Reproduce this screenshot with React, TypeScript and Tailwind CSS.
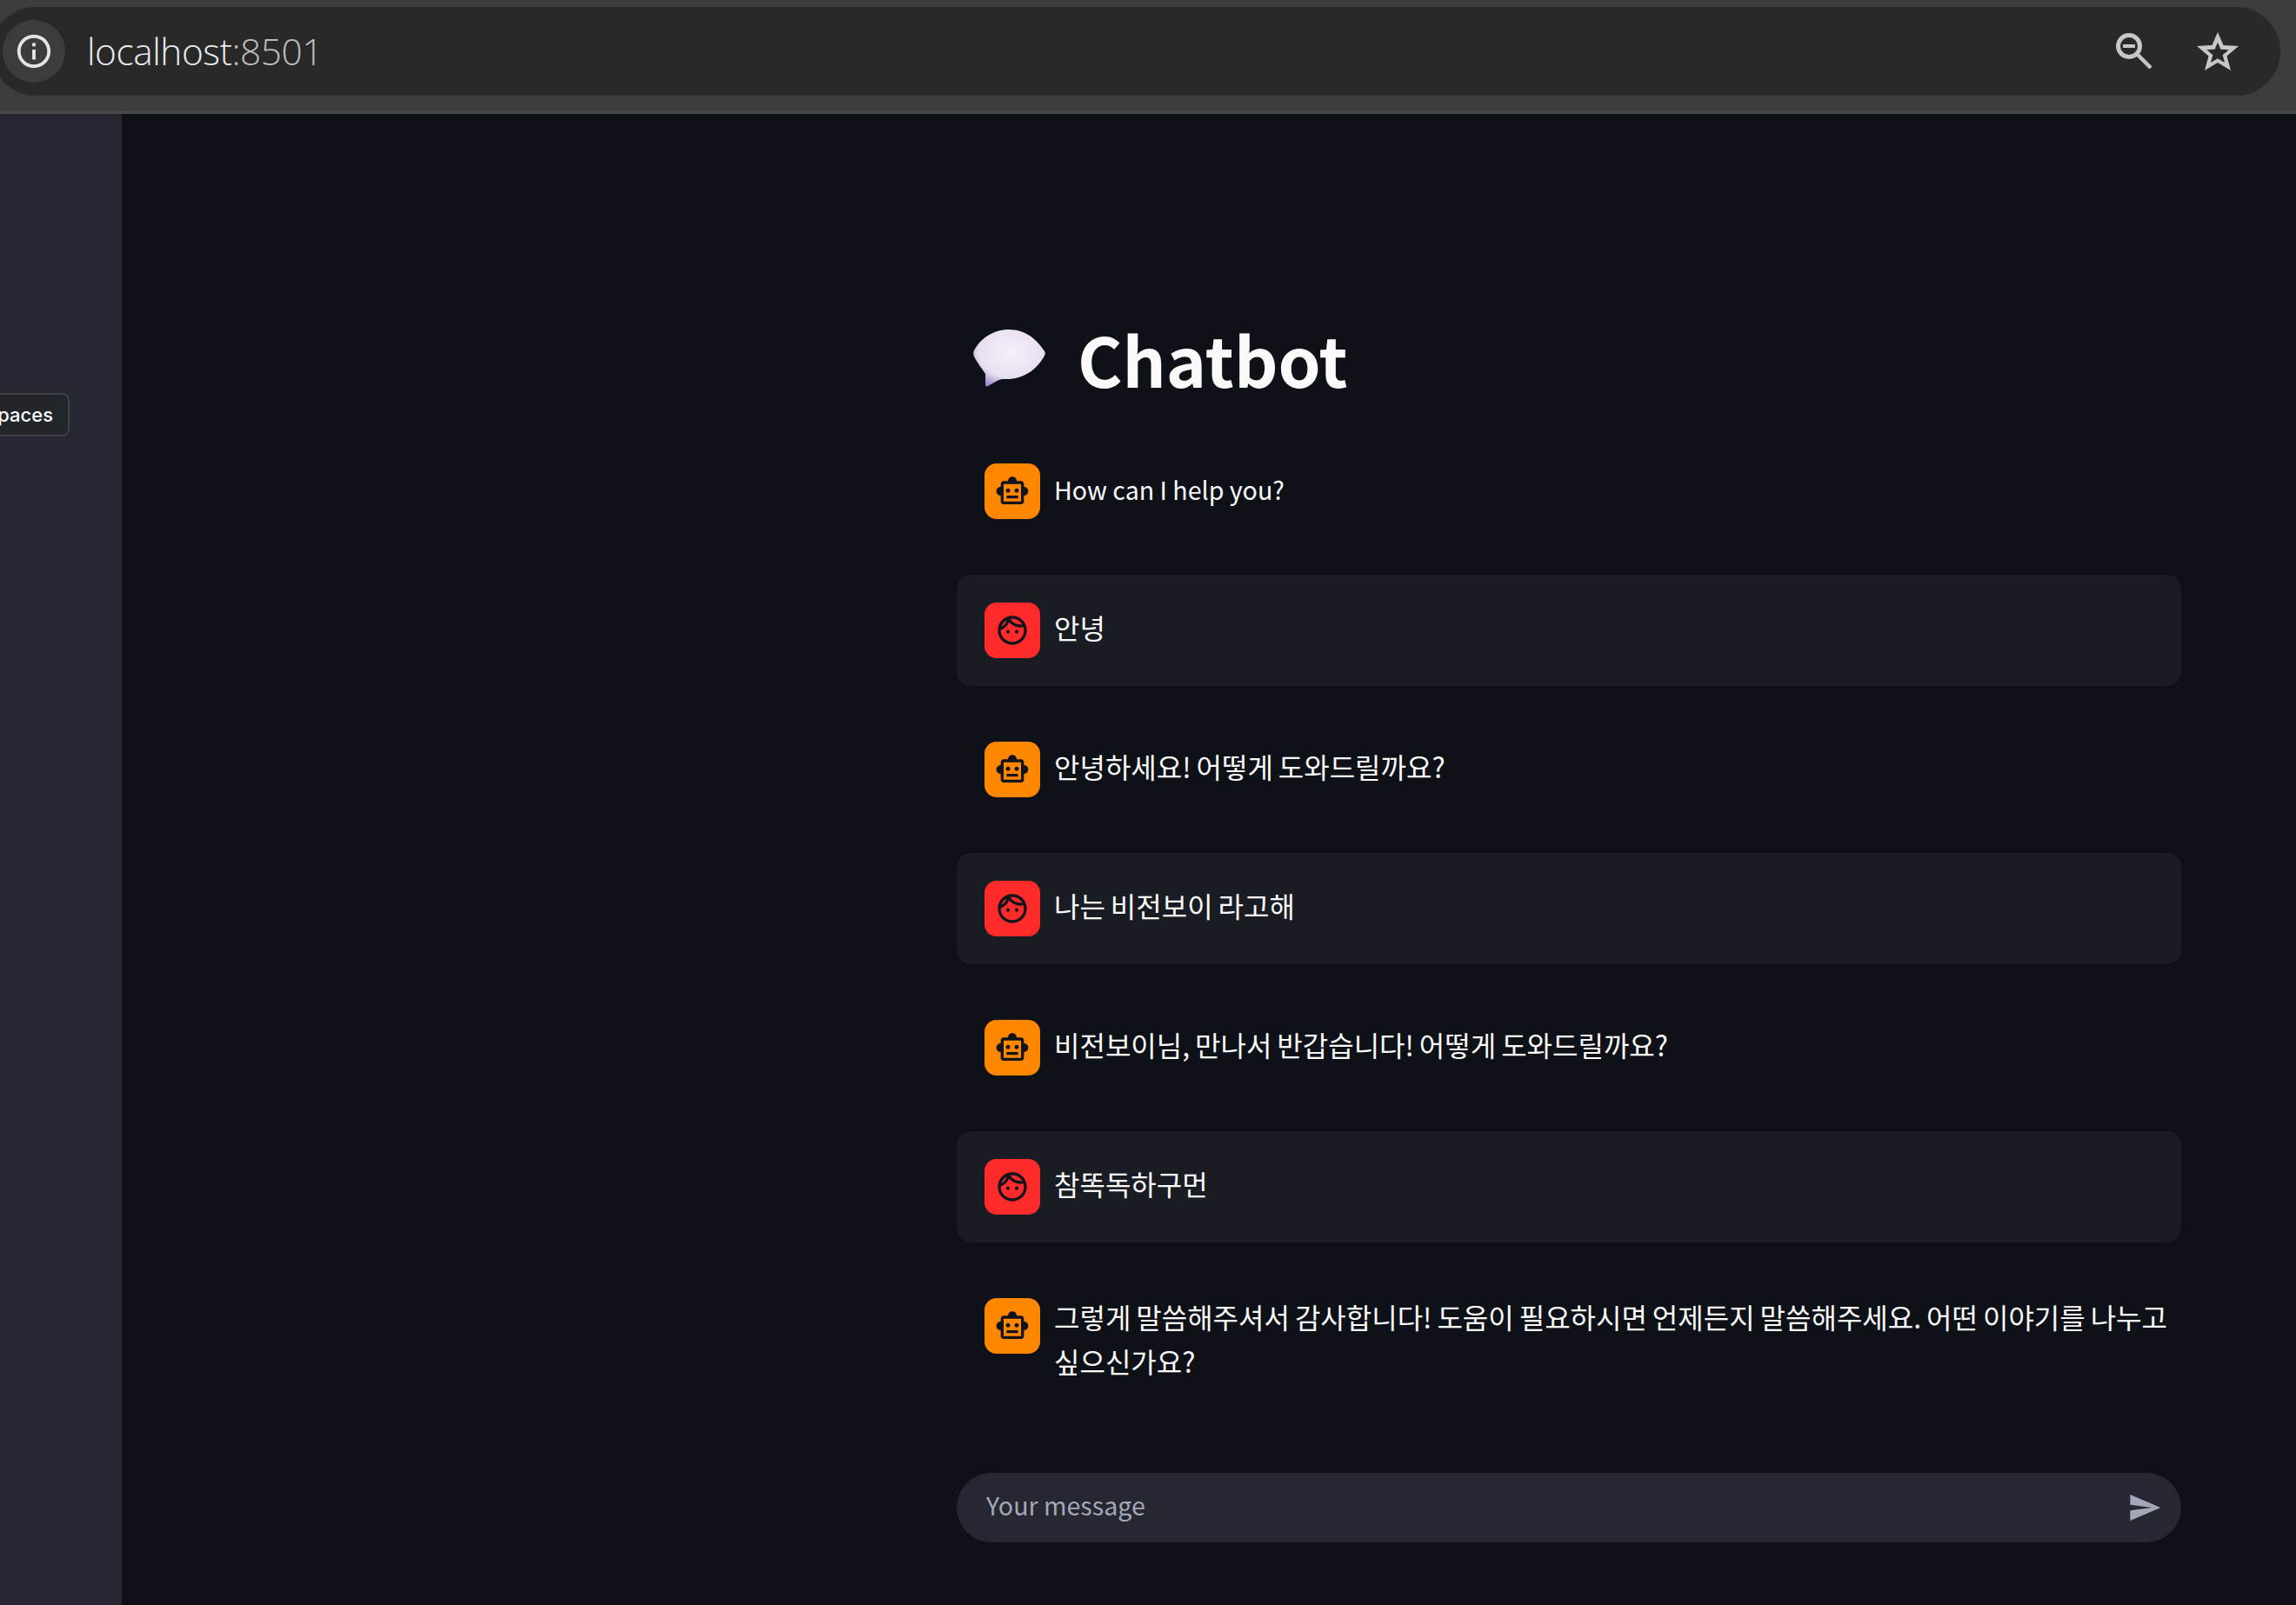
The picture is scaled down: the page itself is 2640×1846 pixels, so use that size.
import { MdOutlineSmartToy, MdOutlineFace, MdInfoOutline, MdSend } from "react-icons/md";

const FONT = "font-['Noto_Sans_CJK_KR','Noto_Sans',sans-serif]";

type Msg = { role: "bot" | "user"; text: string; latin?: boolean; tall?: boolean };

const MESSAGES: Msg[] = [
  { role: "bot", text: "How can I help you?", latin: true },
  { role: "user", text: "안녕" },
  { role: "bot", text: "안녕하세요! 어떻게 도와드릴까요?" },
  { role: "user", text: "나는 비전보이 라고해" },
  { role: "bot", text: "비전보이님, 만나서 반갑습니다! 어떻게 도와드릴까요?" },
  { role: "user", text: "참똑독하구먼" },
  {
    role: "bot",
    text: "그렇게 말씀해주셔서 감사합니다! 도움이 필요하시면 언제든지 말씀해주세요. 어떤 이야기를 나누고 싶으신가요?",
    tall: true,
  },
];

function SpeechBubble() {
  return (
    <svg width="88" height="70" viewBox="0 0 88 70" className="shrink-0">
      <defs>
        <radialGradient id="bubbleFill" cx="52%" cy="40%" r="64%">
          <stop offset="0%" stopColor="#f5eff9" />
          <stop offset="70%" stopColor="#e8e0f0" />
          <stop offset="100%" stopColor="#a18cd0" />
        </radialGradient>
      </defs>
      <path
        d="M43 2C62 2 75 13 84 27C85 29 85 30 84 32C77 45 63 60 37 59C33 59 31 60 26 63L19 67C17 68 16 67 16 65L16 53C13 48 7 41 3 33C2 30 2 28 3 26C11 12 25 2 43 2Z"
        fill="url(#bubbleFill)"
      />
    </svg>
  );
}

function ZoomOutIcon() {
  return (
    <svg width="44" height="44" viewBox="0 0 44 44" fill="none" stroke="currentColor">
      <circle cx="16" cy="16" r="12.5" strokeWidth="5" />
      <path d="M9 16H23" strokeWidth="4" />
      <path d="M25 25L41 41" strokeWidth="4.5" />
    </svg>
  );
}

function StarIcon() {
  return (
    <svg width="48" height="44" viewBox="0 0 48 44" fill="currentColor">
      <path
        fillRule="evenodd"
        d="M24 0L30.5 15L48 16L34.5 27.5L39 44L24 35L9 44L13.5 27.5L0 16L17.5 15ZM24 11.7L20.55 19.7L11.3 20.2L18.4 26.3L16 35L24 30.3L32 35L29.6 26.3L36.7 20.2L27.45 19.7Z"
      />
    </svg>
  );
}

function ChatRow({ role, text, latin, tall }: Msg) {
  const isUser = role === "user";
  let textClass = "text-[32px] pt-[3px] [word-spacing:-1.2px]";
  if (latin) textClass = "text-[28.6px] pt-[4px]";
  if (tall) textClass = "text-[32px] -mt-[4px] [word-spacing:-1.2px]";
  return (
    <div className={`flex gap-[16px] py-[32px] pl-[32px] pr-[8px] rounded-[16px] ${isUser ? "bg-[#1a1c24]" : ""}`}>
      <div
        className={`w-[64px] h-[64px] shrink-0 rounded-[14px] flex items-center justify-center text-[#12141c] ${
          isUser ? "bg-[#ff2b2b]" : "bg-[#ff8700]"
        }`}
      >
        {isUser ? <MdOutlineFace size={40} /> : <MdOutlineSmartToy size={40} />}
      </div>
      <p className={`leading-[51px] text-[#fafafa] break-keep ${tall ? "mb-[4px]" : ""} ${textClass}`}>{text}</p>
    </div>
  );
}

export default function App() {
  return (
    <div className={`h-[1846px] flex flex-col overflow-hidden bg-[#0e1117] ${FONT}`}>
      {/* browser bar */}
      <div className="h-[131px] shrink-0 bg-[#3c3c3c] border-b-[3px] border-[#494949] pt-[8px] pr-[18px] overflow-hidden">
        <div className="-ml-[10px] h-[102px] rounded-full bg-[#292929] flex items-center pl-[13px] pr-[48px]">
          <div className="w-[72px] h-[72px] rounded-full bg-[#3c3c3c] flex items-center justify-center text-[#e3e3e3] shrink-0">
            <MdInfoOutline size={46} />
          </div>
          <span className="ml-[25px] text-[42.5px] font-light font-['Open_Sans',sans-serif] text-[#e8eaed] tracking-[-0.5px]">
            localhost<span className="text-[#bdbdbd]">:8501</span>
          </span>
          <div className="ml-auto flex items-center gap-[50px] text-[#c7c7c7]">
            <ZoomOutIcon />
            <StarIcon />
          </div>
        </div>
      </div>

      <div className="flex-1 flex min-h-0">
        {/* sidebar, cut off at the left edge */}
        <div className="w-[140px] shrink-0 bg-[#262730] overflow-hidden flex justify-end pt-[321px] pr-[60px]">
          <div className="h-[50px] shrink-0 rounded-[8px] border-2 border-[#3d4149] bg-[#22252a] flex items-center pl-[18px] pr-[17px] text-[22px] font-medium font-['Inter',sans-serif] text-[#fafafa] whitespace-nowrap">
            Spaces
          </div>
        </div>

        {/* main column */}
        <div className="flex-1 flex justify-end pr-[132px]">
          <div className="w-[1408px] flex flex-col">
            <div className="flex items-center h-[110px] mt-[226px] mb-[34px] pl-[17px]">
              <SpeechBubble />
              <h1 className="ml-[34px] text-[78.6px] leading-[110px] font-bold text-[#fafafa]">Chatbot</h1>
            </div>
            <div className="flex flex-col gap-[32px]">
              {MESSAGES.map((m, i) => (
                <ChatRow key={i} role={m.role} text={m.text} latin={m.latin} tall={m.tall} />
              ))}
            </div>
            <div className="mt-[67px] h-[80px] rounded-full bg-[#262730] flex items-center pl-[34px] pr-[22px]">
              <span className="text-[28.6px] text-[#a3a8b8] pb-[6px]">Your message</span>
              <MdSend size={40} className="ml-auto text-[#a3a8b8]" />
            </div>
          </div>
        </div>
      </div>
    </div>
  );
}
